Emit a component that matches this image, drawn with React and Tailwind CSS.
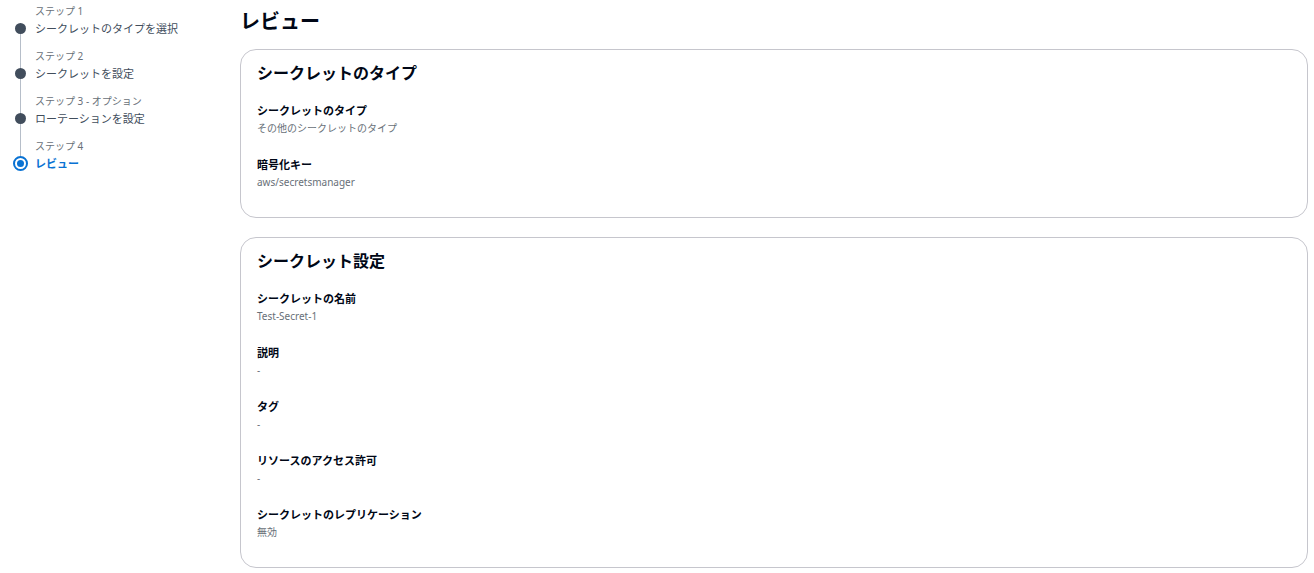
import React from "react";

const steps = [
  { label: "ステップ 1", title: "シークレットのタイプを選択" },
  { label: "ステップ 2", title: "シークレットを設定" },
  { label: "ステップ 3 - オプション", title: "ローテーションを設定" },
  { label: "ステップ 4", title: "レビュー", active: true },
];

const sections = [
  {
    title: "シークレットのタイプ",
    items: [
      { label: "シークレットのタイプ", value: "その他のシークレットのタイプ" },
      { label: "暗号化キー", value: "aws/secretsmanager" },
    ],
  },
  {
    title: "シークレット設定",
    items: [
      { label: "シークレットの名前", value: "Test-Secret-1" },
      { label: "説明", value: "-" },
      { label: "タグ", value: "-" },
      { label: "リソースのアクセス許可", value: "-" },
      { label: "シークレットのレプリケーション", value: "無効" },
    ],
  },
];

function Step({ step, last }) {
  return (
    <li className="relative flex h-[45px]">
      <div className="relative w-[35px] shrink-0">
        {!last && (
          <span className="absolute left-[19.5px] top-[27px] h-[45px] w-px bg-[#b6bec9]" />
        )}
        {step.active ? (
          <span className="absolute left-[13px] top-[20px] flex h-[15px] w-[15px] items-center justify-center rounded-full border-2 border-[#0972d3] bg-white">
            <span className="h-[7px] w-[7px] rounded-full bg-[#0972d3]" />
          </span>
        ) : (
          <span className="absolute left-[15px] top-[22px] h-[11px] w-[11px] rounded-full bg-[#414d5c]" />
        )}
      </div>
      <div className="pt-[3px]">
        <div className="text-[10px] leading-[14px] text-[#687078]">{step.label}</div>
        <div
          className={
            "mt-[3px] text-[11px] leading-[16px] " +
            (step.active ? "font-bold text-[#0972d3]" : "text-[#414d5c]")
          }
        >
          {step.title}
        </div>
      </div>
    </li>
  );
}

function Section({ section }) {
  return (
    <section className="rounded-[16px] border border-[#c6c6cd] bg-white px-4 pt-[12px] pb-[27px]">
      <h2 className="text-[16px] font-bold leading-[22px] text-[#000716]">
        {section.title}
      </h2>
      <div className="mt-[19px] flex flex-col gap-[21px]">
        {section.items.map((item) => (
          <div key={item.label}>
            <div className="text-[11px] font-bold leading-[16px] text-[#000716]">
              {item.label}
            </div>
            <div className="mt-px text-[10px] leading-[16px] text-[#687078]">
              {item.value}
            </div>
          </div>
        ))}
      </div>
    </section>
  );
}

export default function App() {
  return (
    <div className="flex min-h-[573px] bg-white font-['Noto_Sans','Noto_Sans_CJK_JP',sans-serif] text-[#000716]">
      <nav className="w-[240px] shrink-0">
        <ol className="mt-[1px]">
          {steps.map((step, i) => (
            <Step key={step.label} step={step} last={i === steps.length - 1} />
          ))}
        </ol>
      </nav>
      <main className="flex-1 pr-[6px]">
        <h1 className="mt-[8px] text-[20px] font-bold leading-[28px]">レビュー</h1>
        <div className="mt-[13px] flex flex-col gap-[19px]">
          {sections.map((s) => (
            <Section key={s.title} section={s} />
          ))}
        </div>
      </main>
    </div>
  );
}
